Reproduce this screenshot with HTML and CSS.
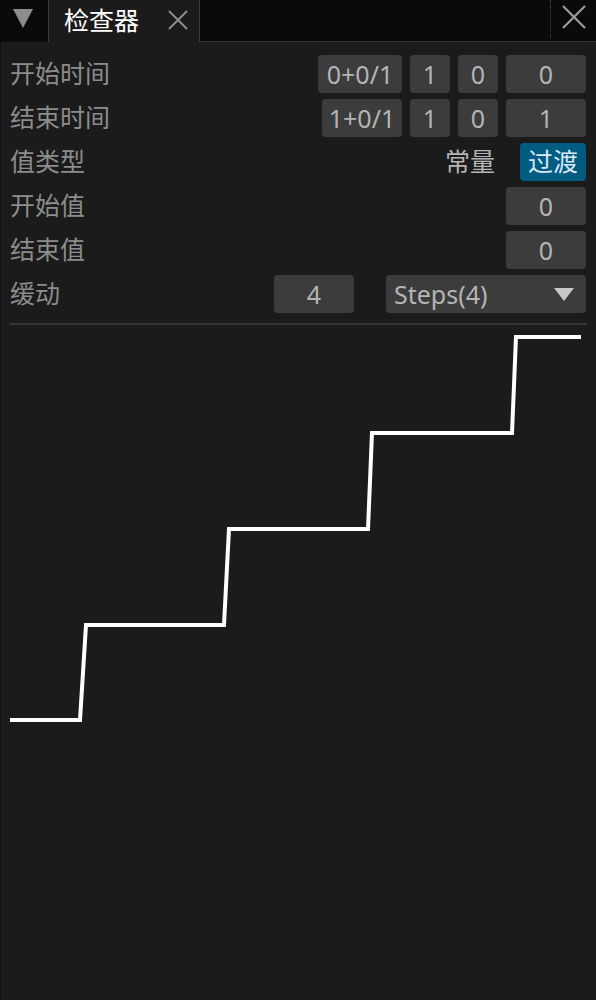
FILE: index.html
```html
<!DOCTYPE html>
<html lang="zh">
<head>
<meta charset="utf-8">
<title>检查器</title>
<link rel="stylesheet" href="styles.css">
</head>
<body>
<div class="tabbar">
  <div class="collapse">
    <svg class="tri" width="20" height="19" viewBox="0 0 20 19"><polygon points="0,0 20,0 10,19" fill="#8c8c8c"/></svg>
  </div>
  <div class="tab">
    <span class="tab-title">检查器</span>
    <svg class="tab-close" width="20" height="20" viewBox="0 0 20 20"><path d="M1 1 L19 19 M19 1 L1 19" stroke="#8c8c8c" stroke-width="2" fill="none"/></svg>
  </div>
  <div class="tab-rest">
    <div class="rest-fill"></div>
    <div class="dotsep"></div>
    <div class="win-close">
      <svg width="24" height="24" viewBox="0 0 24 24"><path d="M1 1 L23 23 M23 1 L1 23" stroke="#9a9a9a" stroke-width="2.2" fill="none"/></svg>
    </div>
  </div>
</div>
<div class="panel">
  <div class="form">
    <div class="row">
      <span class="label">开始时间</span>
      <div class="fields">
        <span class="box w84">0+0/1</span>
        <span class="box w40">1</span>
        <span class="box w40">0</span>
        <span class="box w80">0</span>
      </div>
    </div>
    <div class="row">
      <span class="label">结束时间</span>
      <div class="fields">
        <span class="box w80">1+0/1</span>
        <span class="box w40">1</span>
        <span class="box w40">0</span>
        <span class="box w80">1</span>
      </div>
    </div>
    <div class="row">
      <span class="label">值类型</span>
      <div class="fields">
        <span class="plain">常量</span>
        <span class="box selected">过渡</span>
      </div>
    </div>
    <div class="row">
      <span class="label">开始值</span>
      <div class="fields">
        <span class="box w80">0</span>
      </div>
    </div>
    <div class="row">
      <span class="label">结束值</span>
      <div class="fields">
        <span class="box w80">0</span>
      </div>
    </div>
    <div class="row">
      <span class="label">缓动</span>
      <div class="fields wide-gap">
        <span class="box w80">4</span>
        <span class="box combo"><span class="combo-text">Steps(4)</span><svg width="20" height="13" viewBox="0 0 20 13"><polygon points="0,0 20,0 10,13" fill="#c8c8c8"/></svg></span>
      </div>
    </div>
  </div>
  <div class="sep"></div>
  <svg class="graph" width="596" height="675" viewBox="0 0 596 675">
    <polyline points="10,395 80,395 86,300 224,300 229,204 368,204 372,108 512,108 516,12 581,12" fill="none" stroke="#ffffff" stroke-width="4" stroke-linejoin="miter"/>
  </svg>
</div>
</body>
</html>
```
FILE: styles.css
```css
html, body {
  margin: 0;
  padding: 0;
  background: #1b1b1b;
}
body {
  width: 596px;
  height: 1000px;
  overflow: hidden;
  font-family: "Noto Sans", "Noto Sans CJK SC", sans-serif;
  font-size: 25px;
}
.tabbar {
  display: flex;
  height: 42px;
  background: #0a0a0a;
}
.collapse {
  width: 48px;
  box-sizing: border-box;
  padding: 9px 0 0 13px;
}
.tri { display: block; }
.tab {
  width: 152px;
  box-sizing: border-box;
  display: flex;
  align-items: center;
  background: #1b1b1b;
  border-left: 1px solid #3a3a3a;
  border-right: 1px solid #3a3a3a;
  padding: 0 0 3px 15px;
}
.tab-title {
  color: #ffffff;
  font-family: "Noto Sans CJK SC", sans-serif;
  line-height: 1;
}
.tab-close {
  margin-left: 29px;
  display: block;
}
.tab-rest {
  flex: 1;
  display: flex;
  border-bottom: 1px solid #303030;
}
.rest-fill { flex: 1; }
.dotsep {
  width: 0;
  height: 38px;
  border-left: 1px dotted #4a4a4a;
}
.win-close {
  width: 45px;
  display: flex;
  justify-content: center;
  padding-top: 5px;
}
.win-close svg { display: block; }
.panel {
  border-left: 1px solid #101010;
}
.form {
  padding: 13px 10px 0 9px;
  display: flex;
  flex-direction: column;
  gap: 6px;
}
.row {
  display: flex;
  align-items: center;
  justify-content: space-between;
  height: 38px;
}
.label {
  color: #8c8c8c;
  font-family: "Noto Sans CJK SC", sans-serif;
  line-height: 1;
  padding-bottom: 4px;
}
.fields {
  display: flex;
  gap: 8px;
  align-items: center;
}
.wide-gap { gap: 32px; }
.box {
  height: 38px;
  box-sizing: border-box;
  background: #3c3c3c;
  border-radius: 4px;
  color: #b4b4b4;
  display: flex;
  align-items: center;
  justify-content: center;
  line-height: 1;
}
.w40 { width: 40px; }
.w80 { width: 80px; }
.w84 { width: 84px; }
.plain {
  color: #b4b4b4;
  font-family: "Noto Sans CJK SC", sans-serif;
  margin-right: 17px;
  line-height: 1;
  padding-bottom: 4px;
}
.box.selected {
  width: 66px;
  background: #005c80;
  color: #d8e8f8;
  font-family: "Noto Sans CJK SC", sans-serif;
  padding-bottom: 3px;
}
.box.combo {
  width: 200px;
  justify-content: space-between;
  padding: 0 12px 0 8px;
}
.combo-text { color: #b4b4b4; }
.combo svg { display: block; }
.sep {
  height: 2px;
  background: #353535;
  margin: 10px 9px 0 9px;
}
.graph {
  display: block;
  margin-left: -1px;
}
```
